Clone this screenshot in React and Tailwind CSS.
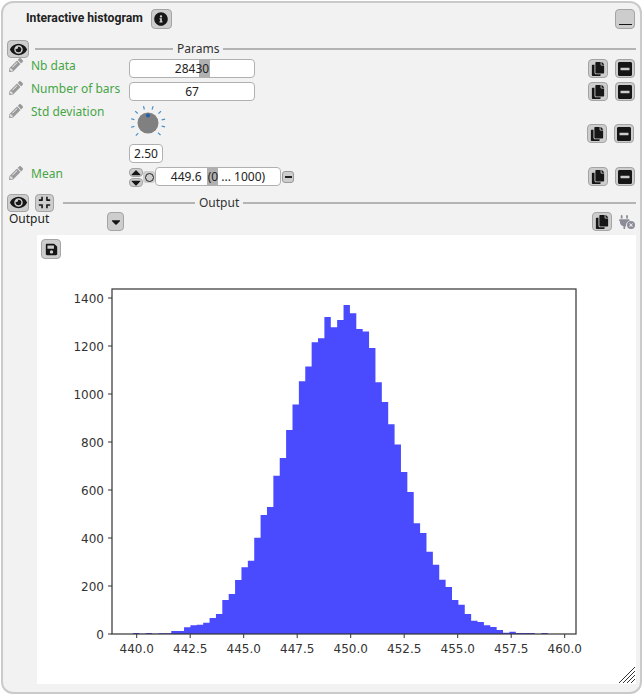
import { FaEye, FaInfoCircle, FaCopy, FaMinusSquare, FaPencilAlt, FaCaretDown, FaCaretUp, FaSave, FaCompress } from "react-icons/fa";
import { FaPlugCircleXmark } from "react-icons/fa6";

const heights = [
    1, 0.2, 1, 0.2, 0.7, 0.7, 3, 3, 6.7, 8.7, 9.3, 11.3, 16, 20, 34, 40, 54, 66.7, 73.3, 96.3, 119, 127, 158.3,
    176, 204, 229.4, 252.7, 267.4, 291.7, 295.7, 317, 306.7, 314, 329, 320.7, 305, 302.4, 286, 251.7, 232, 209.7, 189.4, 162,
    142, 110.7, 101, 82.3, 69.3, 54.3, 47, 34, 29.3, 20, 13.3, 12, 8.7, 7, 4, 1.3, 2.3, 1, 1, 1, 0, 1,
]
const xTicks = ["440.0", "442.5", "445.0", "447.5", "450.0", "452.5", "455.0", "457.5", "460.0"]
const yTicks = ["0", "200", "400", "600", "800", "1000", "1200", "1400"]

function IconButton({ icon: Icon, className = "w-5 h-[19px]", size = 14 }) {
    return (
        <div className={"flex items-center justify-center shrink-0 rounded-[4px] border-[1.5px] border-[#a4a4a4] bg-[#cdcdcd] text-[#161616] " + className}>
            <Icon size={size} />
        </div>
    )
}

function RowButtons({ className = "mr-[5px]" }) {
    return (
        <div className={"flex gap-[7px] ml-auto " + className}>
            <IconButton icon={FaCopy} />
            <IconButton icon={FaMinusSquare} size={16} />
        </div>
    )
}

function Separator({ label, leftWidth }) {
    return (
        <div className="flex items-center flex-1 text-[12px] text-[#333] mr-[4px]">
            <div className={"h-[2px] bg-[#b4b4b4] " + leftWidth}></div>
            <span className="px-[4px] leading-none">{label}</span>
            <div className="h-[2px] bg-[#b4b4b4] flex-1"></div>
        </div>
    )
}

function Label({ text }) {
    return (
        <div className="flex items-start w-[126px] shrink-0 h-full">
            <FaPencilAlt size={14} className="text-[#9a9a9a] ml-[6px] mt-[-1px] shrink-0" />
            <span className="ml-[8px] text-[12px] leading-[14px] text-[#46a546]">{text}</span>
        </div>
    )
}

function Knob() {
    return (
        <svg width="42" height="42" viewBox="-21 -21 42 42" className="ml-[-2px]">
            {[-137, -105, -73, -42, -13, 13, 44, 134, 166, 194].map(a => {
                const r = a * Math.PI / 180
                return (
                    <line key={a} x1={14 * Math.cos(r)} y1={14 * Math.sin(r)} x2={17.5 * Math.cos(r)} y2={17.5 * Math.sin(r)} stroke="#4a90c8" strokeWidth="1.2" />
                )
            })}
            <circle r="10.5" fill="#808080" />
            <circle cx="0" cy="-7.5" r="2" fill="#1f5fae" />
        </svg>
    )
}

function Chart() {
    const left = 75, right = 539, top = 30, bottom = 375
    const start = left + 21
    const step = 6.38
    let outline = `M${start} ${bottom}`
    heights.forEach((h, i) => {
        outline += ` L${start + i * step} ${bottom - h} L${start + (i + 1) * step} ${bottom - h}`
    })
    outline += ` L${start + heights.length * step} ${bottom} Z`
    return (
        <svg width="598" height="420" className="block" fontFamily="'DejaVu Sans', sans-serif" fontSize="12" fill="#333">
            <path d={outline} fill="#4a4aff" />
            <rect x={left} y={top} width={right - left} height={bottom - top} fill="none" stroke="#333" strokeWidth="1.2" />
            {xTicks.map((t, i) => {
                const x = 99.7 + i * 53.5
                return (
                    <g key={t}>
                        <line x1={x} y1={bottom} x2={x} y2={bottom + 4} stroke="#333" />
                        <text x={x} y={bottom + 19} textAnchor="middle">{t}</text>
                    </g>
                )
            })}
            {yTicks.map((t, i) => {
                const y = bottom - i * 48
                return (
                    <g key={t}>
                        <line x1={left - 4} y1={y} x2={left} y2={y} stroke="#333" />
                        <text x={left - 8} y={y + 4.5} textAnchor="end">{t}</text>
                    </g>
                )
            })}
        </svg>
    )
}

export default function App() {
    return (
        <div className="w-[644px] h-[696px] bg-white pt-[1px] pl-[1px] font-['Noto_Sans',sans-serif]">
            <div className="w-[641px] h-[693px] bg-[#f2f2f2] border-2 border-[#cacaca] rounded-[12px] overflow-hidden">
                <div className="flex h-[36px] pt-[6px] items-start">
                    <span className="ml-[23px] text-[12.2px] leading-[18px] font-bold text-[#222] font-['Roboto',sans-serif]">Interactive histogram</span>
                    <IconButton icon={FaInfoCircle} className="ml-[8px] w-[21px] h-[20px]" size={14} />
                    <div className="flex items-end justify-center ml-auto mr-[5px] w-5 h-[20px] pb-[3px] rounded-[4px] border-[1.5px] border-[#a4a4a4] bg-[#cdcdcd]">
                        <div className="w-[13px] h-[1.5px] bg-[#161616]"></div>
                    </div>
                </div>

                <div className="flex items-center h-[20px]">
                    <IconButton icon={FaEye} className="ml-[4px] mr-[6px] w-[22px] h-[18px]" size={17} />
                    <Separator label="Params" leftWidth="w-[138px]" />
                </div>

                <div className="flex items-start h-[20px]">
                    <Label text="Nb data" />
                    <div className="relative w-[126px] h-[19px] bg-white border border-[#b0b0b0] rounded-[4px] text-[12px] leading-[17px] text-center text-[#222]">
                        <span className="bg-[#b0b0b0] absolute left-[69px] top-0 w-[11px] h-full"></span>
                        <span className="relative">28430</span>
                    </div>
                    <RowButtons />
                </div>

                <div className="flex items-start h-[20px] mt-[3px]">
                    <Label text="Number of bars" />
                    <div className="w-[126px] h-[19px] bg-white border border-[#b0b0b0] rounded-[4px] text-[12px] leading-[17px] text-center text-[#222]">67</div>
                    <RowButtons />
                </div>

                <div className="flex items-start h-[65px]">
                    <div className="h-[20px] pt-[3px]">
                        <Label text="Std deviation" />
                    </div>
                    <div className="flex flex-col">
                        <Knob />
                        <div className="w-[34px] h-[19px] bg-white border border-[#b0b0b0] rounded-[4px] text-[12px] leading-[17px] text-center text-[#222]">2.50</div>
                    </div>
                    <RowButtons className="mr-[6px] mt-[22px]" />
                </div>

                <div className="flex items-start h-[20px]">
                    <Label text="Mean" />
                    <div className="flex flex-col gap-[1px] pt-[1px]">
                        <IconButton icon={FaCaretUp} className="w-[14px] h-[9px]" size={15} />
                        <IconButton icon={FaCaretDown} className="w-[14px] h-[9px]" size={15} />
                    </div>
                    <div className="flex items-center justify-center w-[12px] h-[12px] mt-[4px] rounded-[3px] bg-[#cdcdcd]">
                        <div className="w-[9px] h-[9px] rounded-full border-[1.5px] border-[#222]"></div>
                    </div>
                    <div className="relative w-[126px] h-[19px] bg-white border border-[#b0b0b0] rounded-[4px] text-[12px] leading-[17px] text-center text-[#222] whitespace-pre">
                        <span className="bg-[#b0b0b0] absolute left-[51px] top-0 w-[11px] h-full"></span>
                        <span className="relative">449.6  (0 ... 1000)</span>
                    </div>
                    <div className="flex items-center justify-center w-[12px] h-[12px] mt-[4px] ml-[1px] rounded-[3px] border border-[#999] bg-[#cdcdcd]">
                        <div className="w-[7px] h-[1.5px] bg-[#222]"></div>
                    </div>
                    <RowButtons />
                </div>

                <div className="flex items-center h-[19px] mt-[6px]">
                    <IconButton icon={FaEye} className="ml-[4px] mr-[6px] w-[22px] h-[18px]" size={17} />
                    <IconButton icon={FaCompress} className="mr-[9px] w-[19px] h-[18px]" size={13} />
                    <Separator label="Output" leftWidth="w-[132px]" />
                </div>

                <div className="flex items-start h-[20px]">
                    <span className="ml-[6px] w-[98px] text-[12px] leading-[14px] text-[#222]">Output</span>
                    <IconButton icon={FaCaretDown} className="w-[17px] h-[19px]" size={14} />
                    <div className="flex items-center gap-[7px] ml-auto mr-[5px]">
                        <IconButton icon={FaCopy} />
                        <FaPlugCircleXmark size={16} className="text-[#8c8c98]" />
                    </div>
                </div>

                <div className="relative ml-[34px] mr-[4px] mt-[3px] h-[449px] bg-white">
                    <div className="pt-[4px] pl-[4px]">
                        <IconButton icon={FaSave} className="w-5 h-5" size={13} />
                    </div>
                    <Chart />
                    <svg width="18" height="18" viewBox="0 0 18 18" className="absolute right-0 bottom-0" stroke="#333" strokeWidth="1">
                        <line x1="1" y1="17" x2="17" y2="1" />
                        <line x1="5" y1="17" x2="17" y2="5" />
                        <line x1="9" y1="17" x2="17" y2="9" />
                        <line x1="13" y1="17" x2="17" y2="13" />
                    </svg>
                </div>
            </div>
        </div>
    )
}
